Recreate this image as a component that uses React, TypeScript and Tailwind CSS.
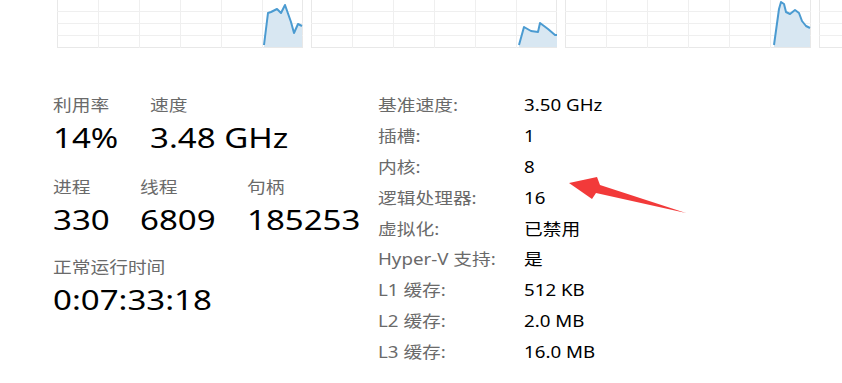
import React from 'react';

const font = { fontFamily: '"Noto Sans", "Noto Sans CJK SC", sans-serif' };

// 每个核心的小图（只显示下半部分）
const cores: { line: string }[] = [
  { line: '207,46 211,14 214,13 220,10 224,14 228,6 234,23 237,34 241,25 245,27' },
  { line: '208,46 213,28 220,32 227,33 229,24 237,30 244,36 246,36' },
  { line: '209,46 214,10 216,3 219,5 221,13 225,15 230,11 234,14 237,22 241,27 245,29' },
  { line: '' },
];

function CoreGraph({ line }: { line: string }) {
  const w = 246;
  const h = 49;
  const cols = [1, 2, 3, 4, 5].map((i) => Math.round((w / 6) * i) + 0.5);
  const rows = [12.5, 24.5, 36.5];
  const pts = line ? line.split(' ') : [];
  const first = pts[0]?.split(',')[0];
  const last = pts[pts.length - 1]?.split(',')[0];
  return (
    <svg width={w} height={h} className="shrink-0 block">
      <rect x="0.5" y="0.5" width={w - 1} height={h - 1} fill="#fff" stroke="#e8e8e8" />
      {cols.map((x) => (
        <line key={x} x1={x} y1="0" x2={x} y2={h} stroke="#efefef" />
      ))}
      {rows.map((y) => (
        <line key={y} x1="0" y1={y} x2={w} y2={y} stroke="#efefef" />
      ))}
      {line && (
        <>
          <polygon points={`${first},48 ${line} ${last},48`} fill="#d8e7f2" />
          <polyline points={line} fill="none" stroke="#4b9bd1" strokeWidth="2" strokeLinejoin="round" />
        </>
      )}
    </svg>
  );
}

function Stat({ label, value, className }: { label: string; value: string; className?: string }) {
  return (
    <div className={className}>
      <div className="text-[16px] leading-[20px] text-[#6a6a6a]">
        <span className="inline-block origin-left scale-x-[1.17] whitespace-nowrap">{label}</span>
      </div>
      <div className="mt-[4px] text-[28px] leading-[36px] text-black">
        <span className="inline-block origin-left scale-x-[1.18] whitespace-nowrap">{value}</span>
      </div>
    </div>
  );
}

const specs: [string, string][] = [
  ['基准速度:', '3.50 GHz'],
  ['插槽:', '1'],
  ['内核:', '8'],
  ['逻辑处理器:', '16'],
  ['虚拟化:', '已禁用'],
  ['Hyper-V 支持:', '是'],
  ['L1 缓存:', '512 KB'],
  ['L2 缓存:', '2.0 MB'],
  ['L3 缓存:', '16.0 MB'],
];

export default function App() {
  return (
    <div className="relative w-[842px] h-[383px] overflow-hidden bg-white" style={font}>
      <div className="flex gap-2 pl-[57px] -mt-px">
        {cores.map((c, i) => (
          <CoreGraph key={i} line={c.line} />
        ))}
      </div>

      <div className="flex pl-[53px] pt-[47px]">
        {/* 左侧实时数据 */}
        <div className="w-[325px] flex flex-col">
          <div className="flex">
            <Stat label="利用率" value="14%" className="w-[97px]" />
            <Stat label="速度" value="3.48 GHz" />
          </div>
          <div className="flex mt-[22px]">
            <Stat label="进程" value="330" className="w-[87px]" />
            <Stat label="线程" value="6809" className="w-[107px]" />
            <Stat label="句柄" value="185253" />
          </div>
          <Stat label="正常运行时间" value="0:07:33:18" className="mt-[20px]" />
        </div>

        {/* 右侧规格 */}
        <div className="flex flex-col -mt-[5px]">
          {specs.map(([k, v]) => (
            <div key={k} className="flex h-[30.8px] items-center text-[16px]">
              <span className="w-[146px]">
                <span className="inline-block origin-left scale-x-[1.17] whitespace-nowrap text-[#6a6a6a]">{k}</span>
              </span>
              <span className="inline-block origin-left scale-x-[1.17] whitespace-nowrap text-black">{v}</span>
            </div>
          ))}
        </div>
      </div>

      {/* 标注箭头 */}
      <svg className="absolute left-0 top-0 pointer-events-none" width="842" height="383">
        <polygon
          points="569,183 597,177 600,185 686,213 596,193 592,199"
          fill="#f23a3a"
        />
      </svg>
    </div>
  );
}
